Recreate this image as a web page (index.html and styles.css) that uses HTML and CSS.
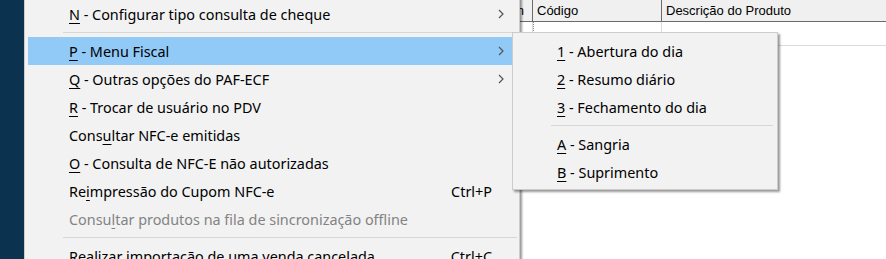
FILE: index.html
```html
<!DOCTYPE html>
<html lang="pt-BR">
<head>
    <meta charset="UTF-8">
    <meta name="viewport" content="width=device-width, initial-scale=1.0">
    <title>PDV - Menu Fiscal</title>
    <link rel="stylesheet" href="styles.css">
</head>
<body>

    <div class="app">
        <div class="sidebar"></div>
        <div class="workspace">
            <div class="grid-head">
                <div class="col col-desc-old"></div>
                <div class="col col-un">Un</div>
                <div class="col col-code">Código</div>
                <div class="col col-desc">Descrição do Produto</div>
            </div>
            <div class="grid-row">
                <div class="cell col-desc-old"></div>
                <div class="cell col-un"></div>
                <div class="cell col-code focus"></div>
                <div class="cell col-desc"></div>
            </div>
        </div>
    </div>

    <!-- menu principal -->
    <div class="menu main-menu">
        <div class="item"><span class="label"><u>N</u> - Configurar tipo consulta de cheque</span><span class="arrow"><svg width="6" height="10" viewBox="0 0 6 10"><path d="M1 1 L5 5 L1 9" /></svg></span></div>
        <div class="sep"></div>
        <div class="item active"><span class="label"><u>P</u> - Menu Fiscal</span><span class="arrow"><svg width="6" height="10" viewBox="0 0 6 10"><path d="M1 1 L5 5 L1 9" /></svg></span></div>
        <div class="item"><span class="label"><u>Q</u> - Outras opções do PAF-ECF</span><span class="arrow"><svg width="6" height="10" viewBox="0 0 6 10"><path d="M1 1 L5 5 L1 9" /></svg></span></div>
        <div class="item"><span class="label"><u>R</u> - Trocar de usuário no PDV</span><span class="arrow"></span></div>
        <div class="item"><span class="label">Cons<u>u</u>ltar NFC-e emitidas</span><span class="arrow"></span></div>
        <div class="item"><span class="label"><u>O</u> - Consulta de NFC-E não autorizadas</span><span class="arrow"></span></div>
        <div class="item"><span class="label">Re<u>i</u>mpressão do Cupom NFC-e</span><span class="shortcut">Ctrl+P</span><span class="arrow"></span></div>
        <div class="item disabled"><span class="label">Consu<u>l</u>tar produtos na fila de sincronização offline</span><span class="arrow"></span></div>
        <div class="sep"></div>
        <div class="item"><span class="label">Realizar importação de uma venda cancelada</span><span class="shortcut">Ctrl+C</span><span class="arrow"></span></div>
    </div>

    <!-- submenu fiscal -->
    <div class="menu sub-menu">
        <div class="item"><span class="label"><u>1</u> - Abertura do dia</span></div>
        <div class="item"><span class="label"><u>2</u> - Resumo diário</span></div>
        <div class="item"><span class="label"><u>3</u> - Fechamento do dia</span></div>
        <div class="sep"></div>
        <div class="item"><span class="label"><u>A</u> - Sangria</span></div>
        <div class="item"><span class="label"><u>B</u> - Suprimento</span></div>
    </div>

</body>
</html>
```

FILE: styles.css
```css
body {
    margin: 0;
    width: 886px;
    height: 259px;
    overflow: hidden;
    position: relative;
    background: #fff;
    font-family: "Segoe UI", "Noto Sans", sans-serif;
}

.app {
    display: flex;
    height: 259px;
}

.sidebar {
    width: 24px;
    background: #0b3350;
}

.workspace {
    flex: 1;
    background: #fff;
}

.grid-head {
    display: flex;
    height: 21px;
    background: #f0f0f0;
    border-bottom: 1px solid #6b6b6b;
    font-family: "Liberation Sans", Arial, sans-serif;
    font-size: 13px;
    line-height: 21px;
    color: #000;
}

.grid-head .col {
    box-sizing: border-box;
    border-right: 1px solid #6b6b6b;
    padding-left: 4px;
    white-space: nowrap;
}

.grid-row {
    display: flex;
    height: 23px;
    border-bottom: 1px solid #dcdcdc;
}

.grid-row .cell {
    box-sizing: border-box;
    border-right: 1px solid #dcdcdc;
}

.col-desc-old { width: 470px; }
.col-un { width: 39px; text-align: right; padding-right: 8px; }
.col-code { width: 129px; }
.col-desc { flex: 1; border-right: none !important; }

.cell.focus {
    border-left: 1px dotted #888;
}

.menu {
    position: absolute;
    box-sizing: border-box;
    background: #f2f2f2;
    border: 1px solid #cccccc;
    box-shadow: 2px 2px 2px rgba(0, 0, 0, 0.4);
    padding: 4px 0;
    font-size: 14.4px;
    color: #000;
}

.main-menu {
    left: 24px;
    top: -5px;
    width: 496px;
    height: 300px;
}

.sub-menu {
    left: 512px;
    top: 32px;
    width: 266px;
    height: 158px;
}

.item {
    display: flex;
    align-items: center;
    height: 28px;
    margin: 0 3px;
    padding-left: 41px;
    white-space: nowrap;
}

.item.active {
    background: #91c9f7;
}

.item.disabled {
    color: #838383;
}

.item u {
    text-underline-offset: 3px;
}

.label {
    flex: 1;
}

.arrow {
    width: 24px;
    display: flex;
    justify-content: flex-end;
    padding-right: 12px;
    box-sizing: border-box;
}

.arrow svg path {
    fill: none;
    stroke: #555;
    stroke-width: 1.2;
}

.sep {
    height: 9px;
    display: flex;
    align-items: center;
}

.sep::before {
    content: "";
    flex: 1;
    height: 1px;
    background: #d7d7d7;
    margin-left: 38px;
    margin-right: 2px;
}

.sub-menu .sep::before {
    margin-right: 4px;
}
```
